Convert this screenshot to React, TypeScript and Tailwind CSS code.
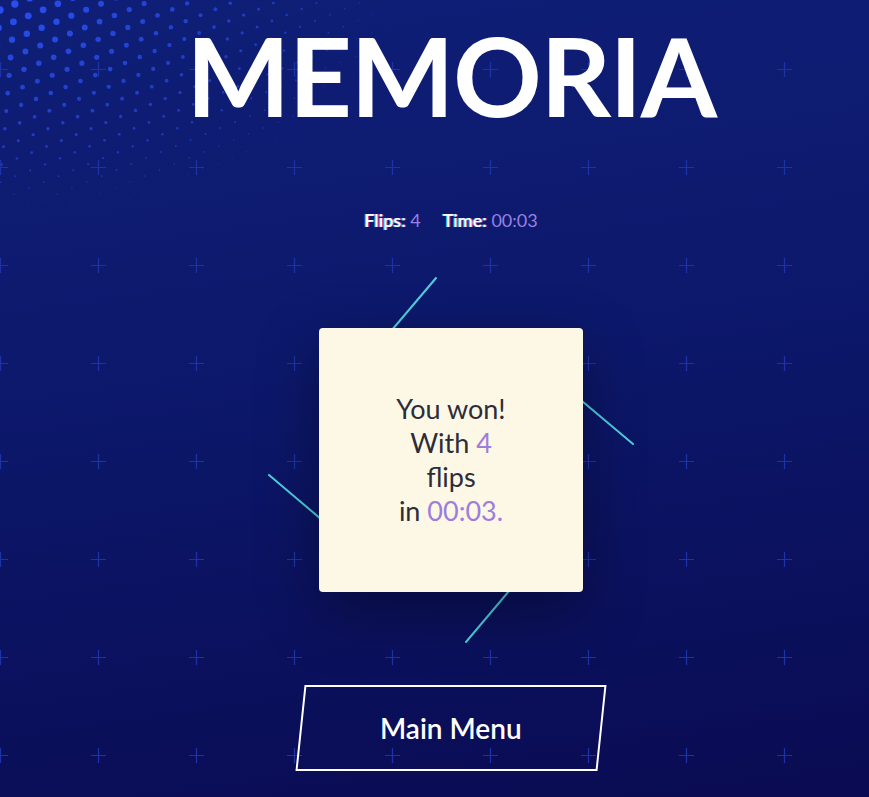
import React from 'react'

const dots = (() => {
  const out: { x: number; y: number; r: number; o: number }[] = []
  const step = 16
  const ang = (-22 * Math.PI) / 180
  for (let i = -10; i < 40; i++) {
    for (let j = -10; j < 30; j++) {
      const gx = i * step + (j % 2) * 8
      const gy = j * step
      const x = gx * Math.cos(ang) - gy * Math.sin(ang)
      const y = gx * Math.sin(ang) + gy * Math.cos(ang) + 10
      if (x < -5 || y < -5) continue
      const d = Math.sqrt((x / 390) ** 2 + (y / 215) ** 2)
      if (d >= 1) continue
      const r = 3.4 * (1 - d) + 0.4
      out.push({ x, y, r, o: 0.4 + 0.6 * (1 - d) })
    }
  }
  return out
})()

const Backdrop = () => (
  <svg className="absolute inset-0 h-full w-full" aria-hidden>
    <defs>
      <pattern
        id="plus"
        width="98"
        height="98"
        patternUnits="userSpaceOnUse"
        patternTransform="translate(-49 20)"
      >
        <path d="M42 49.5h15M49.5 42v15" stroke="#1d32a6" strokeWidth="1.2" />
      </pattern>
    </defs>
    <rect width="100%" height="100%" fill="url(#plus)" />
    {dots.map((d, i) => (
      <circle key={i} cx={d.x} cy={d.y} r={d.r} fill="#2a4ff2" opacity={d.o} />
    ))}
  </svg>
)

// pinwheel strokes: each starts at a corner of a tilted square and runs half an edge
const Pinwheel = () => (
  <svg
    className="absolute left-0 top-0 overflow-visible"
    width="264"
    height="264"
    aria-hidden
  >
    <g stroke="#4ecfdc" strokeWidth="2" strokeLinecap="round">
      <line x1="117" y1="-50" x2="33.5" y2="48.5" />
      <line x1="314" y1="116" x2="215.5" y2="33" />
      <line x1="147" y1="314" x2="230.5" y2="215" />
      <line x1="-50" y1="147" x2="48.5" y2="230.5" />
    </g>
  </svg>
)

export default function App() {
  return (
    <div
      className="relative h-[797px] w-full overflow-hidden bg-[linear-gradient(172deg,#0f1f77_0%,#0c186b_45%,#0a0b52_100%)]"
      style={{ fontFamily: 'Lato, "Noto Sans", sans-serif' }}
    >
      <Backdrop />

      <div className="relative flex flex-col items-center pl-[33px]">
        <h1 className="mt-[19px] text-[110px] font-bold leading-none tracking-[-1.5px] text-white">
          MEMORIA
        </h1>

        <div className="mt-[78px] flex gap-[22px] text-[18px] font-semibold text-white [text-shadow:-1px_0_rgba(60,255,255,0.7),1px_0_rgba(255,70,170,0.7)]">
          <span>
            Flips: <span className="font-normal text-[#9a7fe4] [text-shadow:none]">4</span>
          </span>
          <span>
            Time: <span className="font-normal text-[#9a7fe4] [text-shadow:none]">00:03</span>
          </span>
        </div>

        <div className="relative mt-[94px] h-[264px] w-[264px]">
          <Pinwheel />
          <div className="relative flex h-full w-full items-center justify-center rounded-[4px] bg-[#fdf7e6] shadow-[0_20px_60px_rgba(0,0,0,0.35)]">
            <p className="text-center text-[27px] leading-[34px] text-[#2c2c3a]">
              You won!
              <br />
              With <span className="text-[#9c7edd]">4</span>
              <br />
              flips
              <br />
              in <span className="text-[#9c7edd]">00:03.</span>
            </p>
          </div>
        </div>

        <button className="mt-[93px] flex h-[86px] w-[302px] -skew-x-6 items-center justify-center border-2 border-white bg-transparent">
          <span className="skew-x-6 text-[28px] font-semibold text-white">Main Menu</span>
        </button>
      </div>
    </div>
  )
}
